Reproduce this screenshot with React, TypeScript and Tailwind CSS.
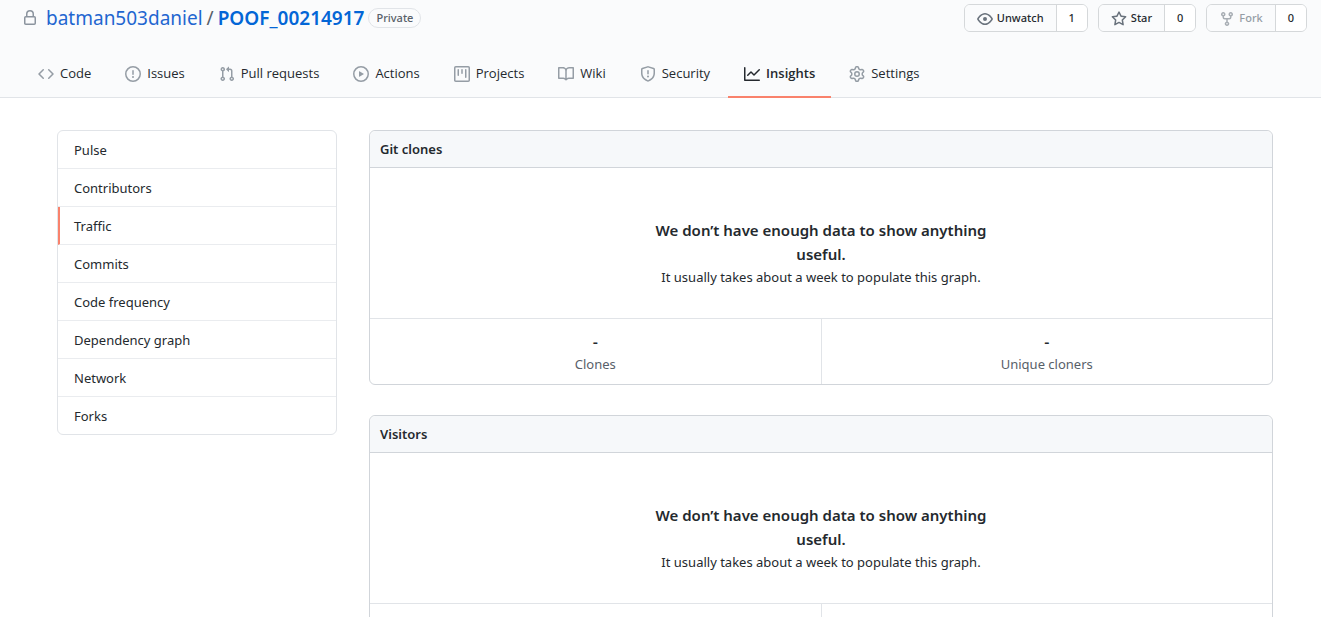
import type { ReactNode } from "react";

const icons = {
  lock: "M4 4v2h-.25A1.75 1.75 0 002 7.75v5.5c0 .966.784 1.75 1.75 1.75h8.5A1.75 1.75 0 0014 13.25v-5.5A1.75 1.75 0 0012.25 6H12V4a4 4 0 10-8 0zm6.5 2V4a2.5 2.5 0 10-5 0v2h5zM12 7.5h.25a.25.25 0 01.25.25v5.5a.25.25 0 01-.25.25h-8.5a.25.25 0 01-.25-.25v-5.5a.25.25 0 01.25-.25H12z",
  code: "M4.72 3.22a.75.75 0 011.06 1.06L2.06 8l3.72 3.72a.75.75 0 11-1.06 1.06L.47 8.53a.75.75 0 010-1.06l4.25-4.25zm6.56 0a.75.75 0 10-1.06 1.06L13.94 8l-3.72 3.72a.75.75 0 101.06 1.06l4.25-4.25a.75.75 0 000-1.06l-4.25-4.25z",
  issue: "M8 1.5a6.5 6.5 0 100 13 6.5 6.5 0 000-13zM0 8a8 8 0 1116 0A8 8 0 010 8zm9 3a1 1 0 11-2 0 1 1 0 012 0zm-.25-6.25a.75.75 0 00-1.5 0v3.5a.75.75 0 001.5 0v-3.5z",
  pull: "M7.177 3.073L9.573.677A.25.25 0 0110 .854v4.792a.25.25 0 01-.427.177L7.177 3.427a.25.25 0 010-.354zM3.75 2.5a.75.75 0 100 1.5.75.75 0 000-1.5zm-2.25.75a2.25 2.25 0 113 2.122v5.256a2.251 2.251 0 11-1.5 0V5.372A2.25 2.25 0 011.5 3.25zM11 2.5h-1V4h1a1 1 0 011 1v5.628a2.251 2.251 0 101.5 0V5A2.5 2.5 0 0011 2.5zm1 10.25a.75.75 0 111.5 0 .75.75 0 01-1.5 0zM3.75 12a.75.75 0 100 1.5.75.75 0 000-1.5z",
  play: "M1.5 8a6.5 6.5 0 1113 0 6.5 6.5 0 01-13 0zM8 0a8 8 0 100 16A8 8 0 008 0zM6.379 5.227A.25.25 0 006 5.442v5.117a.25.25 0 00.379.214l4.264-2.559a.25.25 0 000-.428L6.379 5.227z",
  project: "M1.75 0A1.75 1.75 0 000 1.75v12.5C0 15.216.784 16 1.75 16h12.5A1.75 1.75 0 0016 14.25V1.75A1.75 1.75 0 0014.25 0H1.75zM1.5 1.75a.25.25 0 01.25-.25h12.5a.25.25 0 01.25.25v12.5a.25.25 0 01-.25.25H1.75a.25.25 0 01-.25-.25V1.75zM11.75 3a.75.75 0 00-.75.75v7.5a.75.75 0 001.5 0v-7.5a.75.75 0 00-.75-.75zm-8.25.75a.75.75 0 011.5 0v5.5a.75.75 0 01-1.5 0v-5.5zM8 3a.75.75 0 00-.75.75v3.5a.75.75 0 001.5 0v-3.5A.75.75 0 008 3z",
  book: "M0 1.75A.75.75 0 01.75 1h4.253c1.227 0 2.317.59 3 1.501A3.744 3.744 0 0111.006 1h4.245a.75.75 0 01.75.75v10.5a.75.75 0 01-.75.75h-4.507a2.25 2.25 0 00-1.591.659l-.622.621a.75.75 0 01-1.06 0l-.622-.621A2.25 2.25 0 005.258 13H.75a.75.75 0 01-.75-.75V1.75zm8.755 3a2.25 2.25 0 012.25-2.25H14.5v9h-3.757c-.71 0-1.4.201-1.992.572l.004-7.322zm-1.504 7.324l.004-5.073-.002-2.253A2.25 2.25 0 005.003 2.5H1.5v9h3.757a3.75 3.75 0 011.994.574z",
  shield: "M7.467.133a1.75 1.75 0 011.066 0l5.25 1.68A1.75 1.75 0 0115 3.48V7c0 1.566-.32 3.182-1.303 4.682-.983 1.498-2.585 2.813-5.032 3.855a1.7 1.7 0 01-1.33 0c-2.447-1.042-4.049-2.357-5.032-3.855C1.32 10.182 1 8.566 1 7V3.48a1.75 1.75 0 011.217-1.667l5.25-1.68zm.61 1.429a.25.25 0 00-.153 0l-5.25 1.68a.25.25 0 00-.174.238V7c0 1.358.275 2.666 1.057 3.86.784 1.194 2.121 2.34 4.366 3.297a.2.2 0 00.154 0c2.245-.956 3.582-2.104 4.366-3.298C13.225 9.666 13.5 8.36 13.5 7V3.48a.25.25 0 00-.174-.237l-5.25-1.68zM9 10.5a1 1 0 11-2 0 1 1 0 012 0zm-.25-5.75a.75.75 0 10-1.5 0v3a.75.75 0 001.5 0v-3z",
  graph: "M1.5 1.75a.75.75 0 00-1.5 0v12.5c0 .414.336.75.75.75h14.5a.75.75 0 000-1.5H1.5V1.75zm14.28 2.53a.75.75 0 00-1.06-1.06L10 7.94 7.53 5.47a.75.75 0 00-1.06 0L3.22 8.72a.75.75 0 001.06 1.06L7 7.06l2.47 2.47a.75.75 0 001.06 0l5.25-5.25z",
  gear: "M7.429 1.525a6.593 6.593 0 011.142 0c.036.003.108.036.137.146l.289 1.105c.147.56.55.967.997 1.189.174.086.341.183.501.29.417.278.97.423 1.53.27l1.102-.303c.11-.03.175.016.195.046.219.31.41.641.573.989.014.031.022.11-.059.19l-.815.806c-.411.406-.562.957-.53 1.456a4.588 4.588 0 010 .582c-.032.499.119 1.05.53 1.456l.815.806c.08.08.073.159.059.19a6.494 6.494 0 01-.573.99c-.02.029-.086.074-.195.045l-1.103-.303c-.559-.153-1.112-.008-1.529.27-.16.107-.327.204-.5.29-.449.222-.851.628-.998 1.189l-.289 1.105c-.029.11-.101.143-.137.146a6.613 6.613 0 01-1.142 0c-.036-.003-.108-.037-.137-.146l-.289-1.105c-.147-.56-.55-.967-.997-1.189a4.502 4.502 0 01-.501-.29c-.417-.278-.97-.423-1.53-.27l-1.102.303c-.11.03-.175-.016-.195-.046a6.492 6.492 0 01-.573-.989c-.014-.031-.022-.11.059-.19l.815-.806c.411-.406.562-.957.53-1.456a4.587 4.587 0 010-.582c.032-.499-.119-1.05-.53-1.456l-.815-.806c-.08-.08-.073-.159-.059-.19a6.44 6.44 0 01.573-.99c.02-.029.086-.075.195-.045l1.103.303c.559.153 1.112.008 1.529-.27.16-.107.327-.204.5-.29.449-.222.851-.628.998-1.189l.289-1.105c.029-.11.101-.143.137-.146zM8 0c-.236 0-.47.01-.701.03-.743.065-1.29.615-1.458 1.261l-.29 1.106c-.017.066-.078.158-.211.224a5.994 5.994 0 00-.668.386c-.123.082-.233.09-.3.071L3.27 2.776c-.644-.177-1.392.02-1.82.63a7.977 7.977 0 00-.704 1.217c-.315.675-.111 1.422.363 1.891l.815.806c.05.048.098.147.088.294a6.084 6.084 0 000 .772c.01.147-.038.246-.088.294l-.815.806c-.474.469-.678 1.216-.363 1.891.2.428.436.835.704 1.218.428.609 1.176.806 1.82.63l1.103-.303c.066-.019.176-.011.299.071.213.143.436.272.668.386.133.066.194.158.212.224l.289 1.106c.169.646.715 1.196 1.458 1.26a8.094 8.094 0 001.402 0c.743-.064 1.29-.614 1.458-1.26l.29-1.106c.017-.066.078-.158.211-.224a5.98 5.98 0 00.668-.386c.123-.082.233-.09.3-.071l1.102.302c.644.177 1.392-.02 1.82-.63.268-.382.505-.789.704-1.217.315-.675.111-1.422-.364-1.891l-.814-.806c-.05-.048-.098-.147-.088-.294a6.1 6.1 0 000-.772c-.01-.147.039-.246.088-.294l.814-.806c.475-.469.679-1.216.364-1.891a7.992 7.992 0 00-.704-1.218c-.428-.609-1.176-.806-1.82-.63l-1.103.303c-.066.019-.176.011-.299-.071a5.991 5.991 0 00-.668-.386c-.133-.066-.194-.158-.212-.224L10.16 1.29C9.99.645 9.444.095 8.701.031A8.094 8.094 0 008 0zm1.5 8a1.5 1.5 0 11-3 0 1.5 1.5 0 013 0zM11 8a3 3 0 11-6 0 3 3 0 016 0z",
  eye: "M1.679 7.932c.412-.621 1.242-1.75 2.366-2.717C5.175 4.242 6.527 3.5 8 3.5c1.473 0 2.824.742 3.955 1.715 1.124.967 1.954 2.096 2.366 2.717a.119.119 0 010 .136c-.412.621-1.242 1.75-2.366 2.717C10.825 11.758 9.473 12.5 8 12.5c-1.473 0-2.824-.742-3.955-1.715C2.92 9.818 2.09 8.69 1.679 8.068a.119.119 0 010-.136zM8 2c-1.981 0-3.67.992-4.933 2.078C1.797 5.169.88 6.423.43 7.1a1.619 1.619 0 000 1.798c.45.678 1.367 1.932 2.637 3.024C4.329 13.008 6.019 14 8 14c1.981 0 3.67-.992 4.933-2.078 1.27-1.091 2.187-2.345 2.637-3.023a1.619 1.619 0 000-1.798c-.45-.678-1.367-1.932-2.637-3.023C11.671 2.992 9.981 2 8 2zm0 8a2 2 0 100-4 2 2 0 000 4z",
  star: "M8 .25a.75.75 0 01.673.418l1.882 3.815 4.21.612a.75.75 0 01.416 1.279l-3.046 2.97.719 4.192a.75.75 0 01-1.088.791L8 12.347l-3.766 1.98a.75.75 0 01-1.088-.79l.72-4.194L.818 6.374a.75.75 0 01.416-1.28l4.21-.611L7.327.668A.75.75 0 018 .25zm0 2.445L6.615 5.5a.75.75 0 01-.564.41l-3.097.45 2.24 2.184a.75.75 0 01.216.664l-.528 3.084 2.769-1.456a.75.75 0 01.698 0l2.77 1.456-.53-3.084a.75.75 0 01.216-.664l2.24-2.183-3.096-.45a.75.75 0 01-.564-.41L8 2.694v.001z",
  fork: "M5 3.25a.75.75 0 11-1.5 0 .75.75 0 011.5 0zm0 2.122a2.25 2.25 0 10-1.5 0v.878A2.25 2.25 0 005.75 8.5h1.5v2.128a2.251 2.251 0 101.5 0V8.5h1.5a2.25 2.25 0 002.25-2.25v-.878a2.25 2.25 0 10-1.5 0v.878a.75.75 0 01-.75.75h-4.5A.75.75 0 015 6.25v-.878zm3.75 7.378a.75.75 0 11-1.5 0 .75.75 0 011.5 0zm3-8.75a.75.75 0 100-1.5.75.75 0 000 1.5z",
};

type IconName = keyof typeof icons;

function Icon({ name, className }: { name: IconName; className: string }) {
  return (
    <svg viewBox="0 0 16 16" aria-hidden="true" className={`size-4 shrink-0 fill-current ${className}`}>
      <path fillRule="evenodd" d={icons[name]} />
    </svg>
  );
}

const tabs: { label: string; icon: IconName }[] = [
  { label: "Code", icon: "code" },
  { label: "Issues", icon: "issue" },
  { label: "Pull requests", icon: "pull" },
  { label: "Actions", icon: "play" },
  { label: "Projects", icon: "project" },
  { label: "Wiki", icon: "book" },
  { label: "Security", icon: "shield" },
  { label: "Insights", icon: "graph" },
  { label: "Settings", icon: "gear" },
];

const sections = [
  "Pulse",
  "Contributors",
  "Traffic",
  "Commits",
  "Code frequency",
  "Dependency graph",
  "Network",
  "Forks",
];

function CountedButton({ icon, label, count, disabled }: { icon: IconName; label: string; count: number; disabled?: boolean }) {
  return (
    <div className="flex h-7 overflow-hidden rounded-md border border-[#d5d8da] text-[11px] font-medium">
      <button
        type="button"
        disabled={disabled}
        className="flex items-center gap-1 bg-[#fafbfc] px-3 pt-px text-[#24292e] disabled:text-[#959da5]"
      >
        <Icon name={icon} className={disabled ? "text-[#a8aeb4]" : "text-[#6a737d]"} />
        {label}
      </button>
      <a href="#count" className="flex items-center border-l border-[#d5d8da] bg-white px-3 pt-px text-[#24292e]">
        {count}
      </a>
    </div>
  );
}

function Stat({ label, children }: { label: string; children: ReactNode }) {
  return (
    <li className="flex-1 border-l border-[#e1e4e8] pt-[11px] pb-[9px] text-center first:border-l-0">
      <span className="block text-base leading-6 font-medium text-[#24292e]">{children}</span>
      <span className="block text-[13px] leading-[21px] text-[#586069]">{label}</span>
    </li>
  );
}

function GraphCard({ title, stats }: { title: string; stats: string[] }) {
  return (
    <section className="rounded-md border border-[#d1d5da]">
      <h3 className="rounded-t-md border-b border-[#d1d5da] bg-[#f6f8fa] px-[10px] py-2 text-[13px] leading-5 font-semibold">
        {title}
      </h3>
      <div className="px-8 pt-[50px] pb-[29px] text-center">
        <h4 className="mx-auto max-w-[340px] text-[15px] leading-6 font-semibold">
          We don’t have enough data to show anything useful.
        </h4>
        <p className="text-[13px] leading-[23px]">It usually takes about a week to populate this graph.</p>
      </div>
      <ul className="flex border-t border-[#e1e4e8]">
        {stats.map((stat) => (
          <Stat key={stat} label={stat}>
            -
          </Stat>
        ))}
      </ul>
    </section>
  );
}

export default function App() {
  return (
    <div className="min-h-screen bg-white pb-8 font-['Noto_Sans','Open_Sans',sans-serif] text-[#24292e]">
      <header className="border-b border-[#e1e4e8] bg-[#fafbfc]">
        <div className="flex items-start justify-between pt-1 pr-[14px] pl-[22px]">
          <h1 className="flex items-center text-[19px] leading-7 text-[#586069]">
            <Icon name="lock" className="mr-2 text-[#8b949e]" />
            <a href="#owner" className="text-[#1f66d0]">
              batman503daniel
            </a>
            <span className="mx-1">/</span>
            <a href="#repo" className="font-semibold text-[#0366d6]">
              POOF_00214917
            </a>
            <span className="ml-1 rounded-full border border-[#e1e4e8] px-[7px] text-[11px] leading-[18px] font-medium">
              Private
            </span>
          </h1>
          <div className="flex gap-[10px]">
            <CountedButton icon="eye" label="Unwatch" count={1} />
            <CountedButton icon="star" label="Star" count={0} />
            <CountedButton icon="fork" label="Fork" count={0} disabled />
          </div>
        </div>
        <nav
          aria-label="Repository"
          className="-mb-px flex gap-0.5 pt-5 pl-[22px] font-['Open_Sans','Noto_Sans',sans-serif]"
        >
          {tabs.map(({ label, icon }) => {
            const active = label === "Insights";
            return (
              <a
                key={label}
                href="#tab"
                aria-current={active ? "page" : undefined}
                className={`flex h-[46px] items-center gap-[6px] border-b-2 px-4 text-[13px] ${
                  active ? "border-[#f9826c] font-semibold" : "border-transparent"
                }`}
              >
                <Icon name={icon} className={active ? "text-[#24292e]" : "text-[#959da5]"} />
                {label}
              </a>
            );
          })}
        </nav>
      </header>

      <main className="flex items-start gap-8 pt-8 pr-12 pl-[57px]">
        <nav aria-label="Insights" className="w-[280px] shrink-0 overflow-hidden rounded-md border border-[#e1e4e8]">
          {sections.map((section) => {
            const active = section === "Traffic";
            return (
              <a
                key={section}
                href="#section"
                aria-current={active ? "page" : undefined}
                className={`block border-b border-b-[#eaecef] pt-[9px] pb-[7px] text-[13px] leading-[21px] last:border-b-0 ${
                  active ? "border-l-2 border-l-[#f9826c] pl-[14px]" : "pl-4"
                }`}
              >
                {section}
              </a>
            );
          })}
        </nav>
        <div className="min-w-0 flex-1 space-y-[30px]">
          <GraphCard title="Git clones" stats={["Clones", "Unique cloners"]} />
          <GraphCard title="Visitors" stats={["Views", "Unique visitors"]} />
        </div>
      </main>
    </div>
  );
}
